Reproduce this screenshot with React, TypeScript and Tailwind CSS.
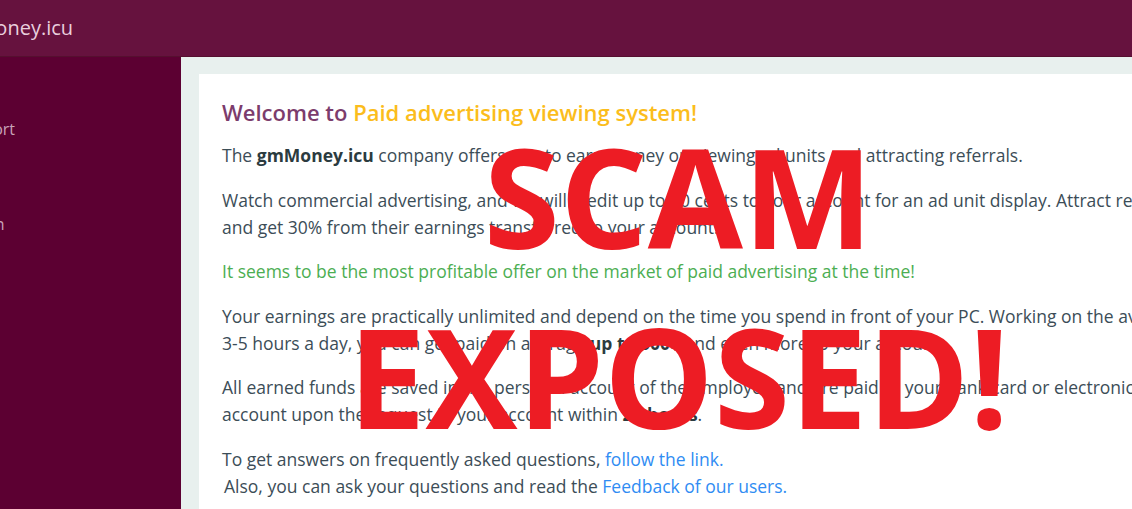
export default function App() {
  return (
    <div className="relative h-[509px] w-[1132px] overflow-hidden bg-[#e8f0ee] font-['Open_Sans',sans-serif]">
      <header className="flex h-[57px] items-center border-b border-[#55102f] bg-[#66123e]">
        <span className="-ml-[52px] text-[20px] text-[#e9cfdd]">gmMoney.icu</span>
      </header>
      <div className="flex">
        <aside className="flex h-[452px] w-[181px] shrink-0 flex-col bg-[#5c0032] pt-[60px] text-[16px] text-[#c9a3b8]">
          <span className="-ml-[45px]">Support</span>
          <span className="-ml-[36px] mt-[71px]">Login</span>
        </aside>
        <main className="flex-1 pl-[18px] pt-[17px]">
          <div className="h-[500px] bg-white pl-[23px] pt-[18px] text-[17.5px] leading-[27px] text-[#3c4d57]">
            <h1 className="text-[22px] font-semibold leading-[40px] text-[#7c3c6c]">
              Welcome to <span className="text-[#fbbd1c]">Paid advertising viewing system!</span>
            </h1>
            <div className="mt-[10px] flex flex-col gap-[17.5px] whitespace-nowrap">
              <p>
                The <b className="text-[#2b3b3f]">gmMoney.icu</b> company offers you to earn money on viewing ad units and attracting referrals.
              </p>
              <p>
                Watch commercial advertising, and we will credit up to 10 cents to your account for an ad unit display. Attract referrals
                <br />
                and get 30% from their earnings transferred to your account.
              </p>
              <p className="text-[#4cae52]">
                It seems to be the most profitable offer on the market of paid advertising at the time!
              </p>
              <p>
                Your earnings are practically unlimited and depend on the time you spend in front of your PC. Working on the average
                <br />
                3-5 hours a day, you can get paid on average <b className="text-[#2b3b3f]">up to 300$</b> and even more to your account.
              </p>
              <p>
                All earned funds are saved in the personal account of the employee and are paid to your bank card or electronic wallet
                <br />
                account upon the request in your account within <b className="text-[#2b3b3f]">24 hours</b>.
              </p>
              <p>
                To get answers on frequently asked questions, <span className="text-[#2f8cf3]">follow the link.</span>
                <br />
                <span className="pl-[2px]">
                  Also, you can ask your questions and read the <span className="text-[#2f8cf3]">Feedback of our users.</span>
                </span>
              </p>
            </div>
          </div>
        </main>
      </div>
      <div className="pointer-events-none absolute left-[357px] top-[105px] flex w-[643px] flex-col items-center text-[138px] font-bold leading-[180px] text-[#ed1c24]">
        <span>SCAM</span>
        <span>EXPOSED!</span>
      </div>
    </div>
  );
}
